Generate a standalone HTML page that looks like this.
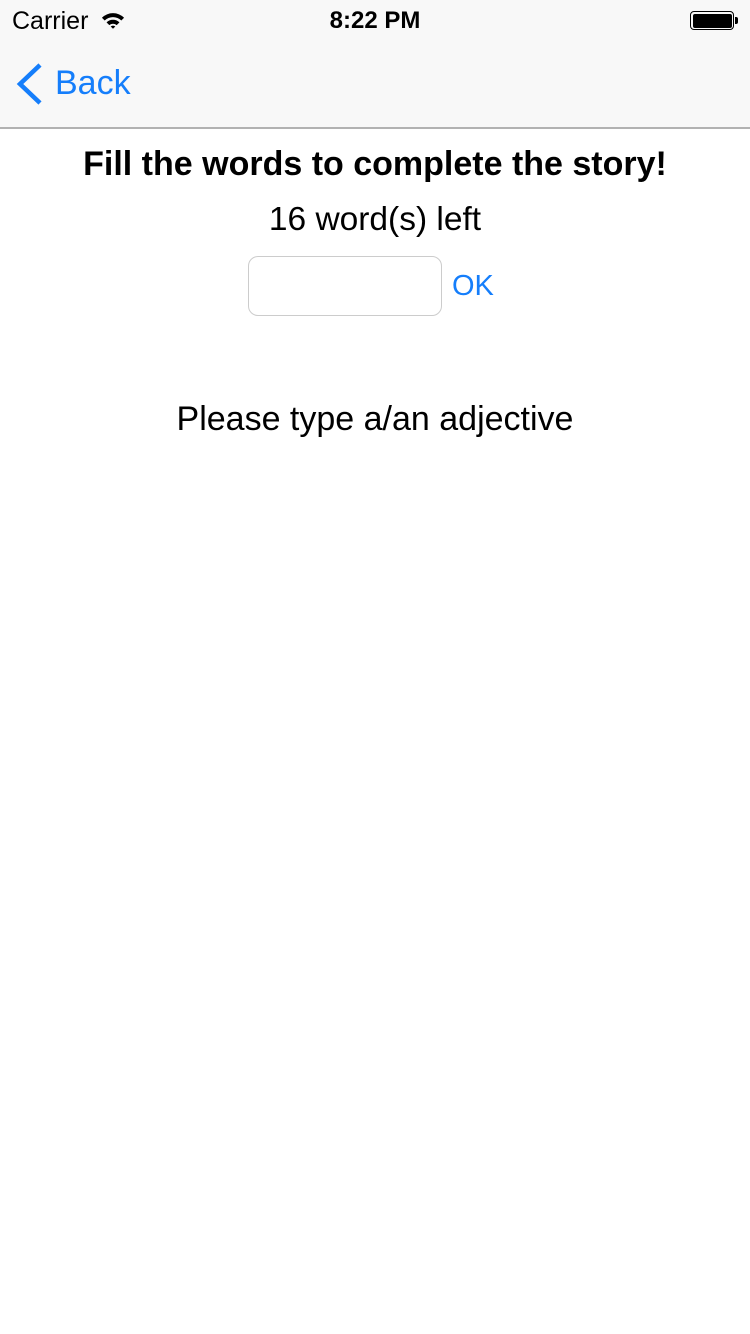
<!DOCTYPE html>
<html><head><meta charset="utf-8"><style>
*{margin:0;padding:0;box-sizing:border-box}
body{width:750px;height:1334px;background:#fff;font-family:"Liberation Sans",sans-serif;position:relative;overflow:hidden}
.nav{position:absolute;left:0;top:0;width:750px;height:129px;background:#f8f8f8;border-bottom:2px solid #b2b2b2}
.t{position:absolute;white-space:nowrap}
</style></head><body>
<div class="nav">
<div class="t" style="left:12px;top:7px;font-size:25px;color:#000">Carrier</div>
<svg style="position:absolute;left:101px;top:11px" width="24" height="19" viewBox="0 0 26 20">
<path d="M1 7 A17 17 0 0 1 25 7 L22 10 A13 13 0 0 0 4 10Z" fill="#000"/>
<path d="M6 12 A10 10 0 0 1 20 12 L17 15 A6 6 0 0 0 9 15Z" fill="#000"/>
<path d="M10.5 16.5 A4 4 0 0 1 15.5 16.5 L13 19Z" fill="#000"/>
</svg>
<div class="t" style="left:0;width:750px;text-align:center;top:7px;font-size:24px;font-weight:bold;color:#000">8:22 PM</div>
<div style="position:absolute;left:690px;top:11px;width:44px;height:19px;border:1.5px solid #000;border-radius:4px;padding:1.5px"><div style="width:100%;height:100%;background:#000;border-radius:2px"></div></div>
<div style="position:absolute;left:735px;top:17px;width:3px;height:7px;background:#000;border-radius:0 2px 2px 0"></div>
<svg style="position:absolute;left:14px;top:62px" width="30" height="44" viewBox="0 0 30 44"><path d="M26 3 L6 22 L26 41" fill="none" stroke="#157efb" stroke-width="4.5"/></svg>
<div class="t" style="left:55px;top:64px;font-size:34px;color:#157efb">Back</div>
</div>
<div class="t" style="left:0;width:750px;text-align:center;top:145px;font-size:34px;font-weight:bold;color:#000">Fill the words to complete the story!</div>
<div class="t" style="left:0;width:750px;text-align:center;top:201px;font-size:33.5px;color:#000">16 word(s) left</div>
<div style="position:absolute;left:248px;top:256px;width:194px;height:60px;border:1.5px solid #ccc;border-radius:10px"></div>
<div class="t" style="left:452px;top:270px;font-size:29px;color:#157efb">OK</div>
<div class="t" style="left:0;width:750px;text-align:center;top:400px;font-size:34px;color:#000">Please type a/an adjective</div>
</body></html>
